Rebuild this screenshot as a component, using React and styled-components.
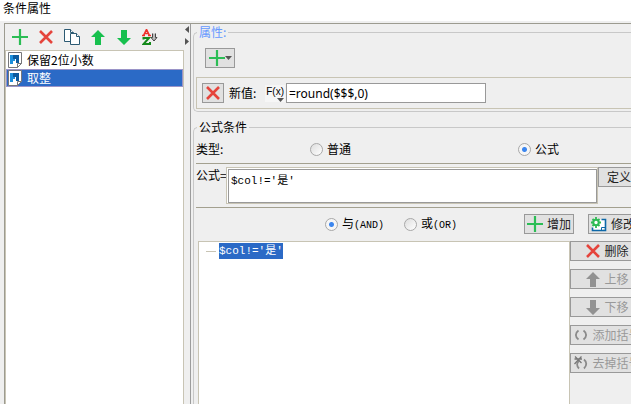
import React, { useState } from "react";
import styled, { createGlobalStyle } from "styled-components";

const items = ["保留2位小数", "取整"];

/* ---------- icons ---------- */

const PlusIcon = () => (
  <svg width="16" height="16" viewBox="0 0 16 16">
    <path d="M8 0V16M0 8H16" stroke="#2bbd55" strokeWidth="2.2" />
  </svg>
);

const CrossIcon = () => (
  <svg width="14" height="14" viewBox="0 0 14 14">
    <path
      d="M1 1L13 13M13 1L1 13"
      stroke="#e5443c"
      strokeWidth="2.6"
      fill="none"
    />
  </svg>
);

const CopyIcon = () => (
  <svg width="16" height="16" viewBox="0 0 16 16" fill="#fff">
    <path d="M0.5 0.5H6.5L9.5 3.5V12.5H0.5Z" stroke="#2c5a73" />
    <path d="M6.5 0.5V3.5H9.5" stroke="#2c5a73" />
    <path d="M6.5 4.5H12.5L15.5 7.5V15.5H6.5Z" stroke="#2c5a73" />
    <path d="M12.5 4.5V7.5H15.5" stroke="#2c5a73" />
  </svg>
);

const ArrowIcon = ({ down, color }) => (
  <svg width="14" height="15" viewBox="0 0 14 15">
    <path
      d={
        down
          ? "M4 0H10V8H14L7 15L0 8H4Z"
          : "M4 15H10V7H14L7 0L0 7H4Z"
      }
      fill={color}
    />
  </svg>
);

const SortIcon = () => (
  <svg width="16" height="16" viewBox="0 0 16 16" fill="none">
    <path
      d="M1.5 6.5L4.5 0.5L7.5 6.5M3 4.5H6.5M0 6.5H3M6 6.5H9"
      stroke="#f0302a"
      strokeWidth="1.6"
    />
    <path
      d="M1.5 10.5V9H7L1.5 15H8V13"
      stroke="#158a1c"
      strokeWidth="2"
    />
    <path
      d="M10.5 4.5V8.5H9L12 12L15 8.5H13.5V4.5"
      fill="#bbb"
      stroke="#444"
    />
  </svg>
);

const DocIcon = () => (
  <svg width="14" height="16" viewBox="0 0 14 16">
    <path d="M0.5 0.5H13.5V11.5L9.5 15.5H0.5Z" fill="#fff" stroke="#77777b" />
    <path d="M9.5 15.5V11.5H13.5Z" fill="#fff" stroke="#77777b" />
    <path d="M2 3H5V7H7V10L5 12H2Z" fill="#1c8fdc" />
    <path d="M5 3H11V11H8V7H5Z" fill="#0b5a9e" />
    <path d="M5 9H8V12H5Z" fill="#fff" />
  </svg>
);

const EditIcon = () => (
  <svg width="16" height="15" viewBox="0 0 16 15" fill="none">
    <path d="M1.5 9V13.5H11L14.5 10.5V2.5H9" fill="#fff" />
    <path d="M1.5 10.5V13.5H14.5V2.5H10.5" stroke="#0d68a8" strokeWidth="1.6" />
    <path d="M10.5 13V10.5H14" stroke="#0d68a8" />
    <circle cx="5" cy="5.5" r="2.7" fill="#fff" stroke="#2fbb55" strokeWidth="2" />
    <path
      d="M5 0V2.5M5 8.5V11M0 5.5H2.5M7.5 5.5H10M1.5 2L3 3.5M7 7.5L8.5 9M8.5 2L7 3.5M3 7.5L1.5 9"
      stroke="#2fbb55"
      strokeWidth="1.8"
    />
  </svg>
);

const BracketIcon = ({ removed }) => (
  <svg width="14" height="14" viewBox="0 0 14 14" fill="none">
    <path
      d={
        removed
          ? "M5 5C2.5 7 2.5 10 5 12.5M10 3.5C13 6 13 9.5 10 12.5"
          : "M4.5 2.5C1 5 1 9 4.5 11.5M9.5 2.5C13 5 13 9 9.5 11.5"
      }
      stroke="#8a8a8a"
      strokeWidth="1.8"
    />
    {removed && (
      <path
        d="M1 0.5L7.5 7M7.5 0.5L0.5 8M0.5 3H8"
        stroke="#777"
        strokeWidth="1.3"
      />
    )}
  </svg>
);

const SmallArrow = ({ dir }) => {
  const paths = {
    left: "M4 0V7L0 3.5Z",
    right: "M0 0V7L4 3.5Z",
    down: "M0 0H7L3.5 4Z",
  };
  return (
    <svg width={dir === "down" ? 7 : 4} height={dir === "down" ? 4 : 7}>
      <path d={paths[dir]} fill="#555" />
    </svg>
  );
};

/* ---------- page ---------- */

export default function App() {
  const [current, setCurrent] = useState(1);
  const [type, setType] = useState("formula");
  const [logic, setLogic] = useState("and");

  return (
    <Page>
      <GlobalStyle />
      <Title>条件属性</Title>
      <Body>
        <Side>
          <Toolbar>
            <ToolButton aria-label="增加">
              <PlusIcon />
            </ToolButton>
            <ToolButton aria-label="删除">
              <CrossIcon />
            </ToolButton>
            <ToolButton aria-label="复制">
              <CopyIcon />
            </ToolButton>
            <ToolButton aria-label="上移">
              <ArrowIcon color="#17c04e" />
            </ToolButton>
            <ToolButton aria-label="下移">
              <ArrowIcon down color="#17c04e" />
            </ToolButton>
            <ToolButton aria-label="排序">
              <SortIcon />
            </ToolButton>
          </Toolbar>
          <List>
            {items.map((item, i) => (
              <li key={item}>
                <Item $active={i === current} onClick={() => setCurrent(i)}>
                  <DocIcon />
                  {item}
                </Item>
              </li>
            ))}
          </List>
        </Side>
        <Splitter>
          <SmallArrow dir="left" />
          <SmallArrow dir="right" />
        </Splitter>
        <Main>
          <Group>
            <Legend $blue>属性:</Legend>
            <AddButton aria-label="增加属性">
              <PlusIcon />
              <SmallArrow dir="down" />
            </AddButton>
            <ValueRow>
              <CrossButton aria-label="删除属性">
                <CrossIcon />
              </CrossButton>
              <ValueLabel htmlFor="value">新值:</ValueLabel>
              <FxButton>
                F(x)
                <SmallArrow dir="down" />
              </FxButton>
              <ValueInput id="value" defaultValue="=round($$$,0)" />
            </ValueRow>
          </Group>

          <Group $fill>
            <Legend>公式条件</Legend>
            <TypeRow>
              <span>类型:</span>
              <RadioLabel>
                <Radio
                  name="type"
                  checked={type === "normal"}
                  onChange={() => setType("normal")}
                />
                普通
              </RadioLabel>
              <RadioLabel>
                <Radio
                  name="type"
                  checked={type === "formula"}
                  onChange={() => setType("formula")}
                />
                公式
              </RadioLabel>
            </TypeRow>
            <Line />
            <FormulaRow>
              <label htmlFor="formula">公式=</label>
              <FormulaFrame>
                <Formula id="formula" defaultValue="$col!='是'" />
              </FormulaFrame>
              <Button $width={42}>定义</Button>
            </FormulaRow>
            <Line />
            <LogicRow>
              <RadioLabel>
                <Radio
                  name="logic"
                  checked={logic === "and"}
                  onChange={() => setLogic("and")}
                />
                <span>
                  与<Mono>(AND)</Mono>
                </span>
              </RadioLabel>
              <RadioLabel>
                <Radio
                  name="logic"
                  checked={logic === "or"}
                  onChange={() => setLogic("or")}
                />
                <span>
                  或<Mono>(OR)</Mono>
                </span>
              </RadioLabel>
              <LogicActions>
                <Button $width={50}>
                  <PlusIcon />
                  增加
                </Button>
                <Button $width={50}>
                  <EditIcon />
                  修改
                </Button>
              </LogicActions>
            </LogicRow>
            <Bottom>
              <Tree>
                <Node>$col!='是'</Node>
              </Tree>
              <Actions>
                <Button $width={75}>
                  <CrossIcon />
                  删除
                </Button>
                <Button $width={75} disabled>
                  <ArrowIcon color="#929292" />
                  上移
                </Button>
                <Button $width={75} disabled>
                  <ArrowIcon down color="#929292" />
                  下移
                </Button>
                <Button $width={75} disabled>
                  <BracketIcon />
                  添加括号
                </Button>
                <Button $width={75} disabled>
                  <BracketIcon removed />
                  去掉括号
                </Button>
              </Actions>
            </Bottom>
          </Group>
        </Main>
      </Body>
    </Page>
  );
}

const GlobalStyle = createGlobalStyle`
  * {
    box-sizing: border-box;
  }
  body {
    margin: 0;
    background: #efefef;
  }
  body, button, input, textarea {
    font-family: "Noto Sans CJK SC", sans-serif;
    font-size: 12px;
    line-height: 16px;
    color: #000;
  }
  svg {
    flex: none;
    display: block;
  }
`;

const Page = styled.div`
  display: flex;
  flex-direction: column;
  height: 100vh;
  overflow: hidden;
`;

const Title = styled.header`
  height: 21px;
  padding-left: 3px;
  background: #fff;
`;

const Body = styled.div`
  flex: 1;
  display: flex;
  min-height: 0;
  margin: 2px 0 0 4px;
  border-top: 1px solid #9c9b90;
  border-left: 1px solid #9c9b90;
`;

const Side = styled.div`
  flex: 0 0 179px;
  display: flex;
  flex-direction: column;
`;

const Toolbar = styled.div`
  display: flex;
  height: 26px;
  padding-left: 2px;
`;

const ToolButton = styled.button`
  display: flex;
  align-items: center;
  justify-content: center;
  width: 26px;
  padding: 0;
  border: none;
  background: none;
`;

const List = styled.ul`
  flex: 1;
  margin: 0;
  padding: 0;
  list-style: none;
  background: #fff;
  border: 1px solid #c8c4b4;
  border-bottom: none;
`;

const Item = styled.button`
  display: flex;
  align-items: center;
  gap: 5px;
  width: 100%;
  height: 18px;
  padding: 0 1px;
  text-align: left;
  border: 1px solid ${(p) => (p.$active ? "#9a94c8" : "transparent")};
  background: ${(p) => (p.$active ? "#2b6ac6" : "#fff")};
  color: ${(p) => (p.$active ? "#fff" : "#000")};
`;

const Splitter = styled.div`
  flex: 0 0 7px;
  display: flex;
  flex-direction: column;
  align-items: center;
  gap: 5px;
  padding-top: 2px;
  border-right: 1px solid #9c9c9c;
`;

const Main = styled.main`
  flex: 1;
  min-width: 0;
  display: flex;
  flex-direction: column;
  padding-left: 2px;
`;

const Group = styled.fieldset`
  flex: ${(p) => (p.$fill ? "1" : "none")};
  min-width: 0;
  margin: 0 0 ${(p) => (p.$fill ? "0" : "7px")};
  padding: 0 0 2px 2px;
  border: 1px solid #c8c8c8;
  border-right: none;
  border-bottom-width: ${(p) => (p.$fill ? "0" : "1px")};
  border-radius: 5px 0 0 5px;
`;

const Legend = styled.legend`
  margin-left: 1px;
  padding: 0 2px;
  color: ${(p) => (p.$blue ? "#6699ff" : "#000")};
`;

const Button = styled.button`
  flex: none;
  display: flex;
  align-items: center;
  justify-content: center;
  gap: 4px;
  width: ${(p) => p.$width}px;
  height: 20px;
  padding: 0;
  white-space: nowrap;
  border: 1px solid #999;
  background: #e1e1e1;
  color: #222;
  &:disabled {
    color: #999;
  }
`;

const AddButton = styled(Button)`
  width: 30px;
  gap: 0;
  margin: 8px 0 9px 9px;
`;

const CrossButton = styled(Button)`
  width: 22px;
`;

const ValueRow = styled.div`
  display: flex;
  align-items: center;
  padding: 5px;
  border: 1px solid #c8c4b4;
  border-right: none;
`;

const ValueLabel = styled.label`
  width: 36px;
  margin-left: 5px;
`;

const FxButton = styled.button`
  display: flex;
  flex-direction: column;
  align-items: flex-end;
  width: 20px;
  margin-right: 1px;
  padding: 0 1px 0 0;
  border: none;
  background: #f6f6f6;
  font-family: "Liberation Sans", sans-serif;
  font-size: 10px;
  line-height: 13px;
`;

const ValueInput = styled.input`
  width: 200px;
  height: 20px;
  padding: 0 2px;
  border: 1px solid #999;
  background: #fff;
  font-family: "Noto Sans", sans-serif;
`;

const TypeRow = styled.div`
  display: grid;
  grid-template-columns: 114px 208px 1fr;
  align-items: center;
  height: 28px;
`;

const RadioLabel = styled.label`
  display: flex;
  align-items: center;
  gap: 4px;
`;

const Radio = styled.input.attrs({ type: "radio" })`
  appearance: none;
  width: 13px;
  height: 13px;
  margin: 0;
  border: 1px solid #a8a8a8;
  border-radius: 50%;
  background: linear-gradient(135deg, #ddd, #fff);
  &:checked {
    background: radial-gradient(circle, #3c86ee 2px, #f6f6f6 3px);
  }
`;

const Line = styled.hr`
  margin: 0;
  border: none;
  border-top: 1px solid #a3a08f;
`;

const FormulaRow = styled.div`
  display: grid;
  grid-template-columns: 30px 1fr 33px;
  padding: 3px 0;
  white-space: nowrap;
`;

const FormulaFrame = styled.div`
  display: flex;
  height: 37px;
  padding: 1px 0 0 1px;
  border: 1px solid #c8c4b4;
  background: #fff;
`;

const Formula = styled.textarea`
  flex: 1;
  min-width: 0;
  padding: 3px 2px;
  border: 1px solid #999;
  resize: none;
  font-family: "Liberation Mono", "Noto Sans CJK SC", monospace;
  font-size: 11px;
`;

const LogicRow = styled.div`
  display: flex;
  align-items: center;
  gap: 20px;
  padding: 6px 0 7px 129px;
  white-space: nowrap;
`;

const Mono = styled.span`
  font-family: "Liberation Mono", monospace;
  font-size: 10px;
`;

const LogicActions = styled.div`
  flex: none;
  width: 107px;
  display: flex;
  gap: 14px;
  margin-left: auto;
`;

const Bottom = styled.div`
  display: flex;
  height: 100vh;
  padding-left: 2px;
`;

const Tree = styled.div`
  flex: 1;
  display: flex;
  align-items: flex-start;
  padding: 1px 0 0 7px;
  background: #fff;
  border: 1px solid #c8c4b4;
  border-bottom: none;
`;

const Node = styled.span`
  display: flex;
  align-items: center;
  gap: 3px;
  font-family: "Liberation Mono", "Noto Sans CJK SC", monospace;
  font-size: 11px;
  color: #fff;
  background: linear-gradient(#2b6ac6, #2b6ac6) 13px 0 no-repeat;
  &::before {
    content: "";
    width: 10px;
    height: 1px;
    background: #c8c4b4;
  }
`;

const Actions = styled.div`
  flex: none;
  width: 61px;
  display: flex;
  flex-direction: column;
  gap: 8px;
`;
